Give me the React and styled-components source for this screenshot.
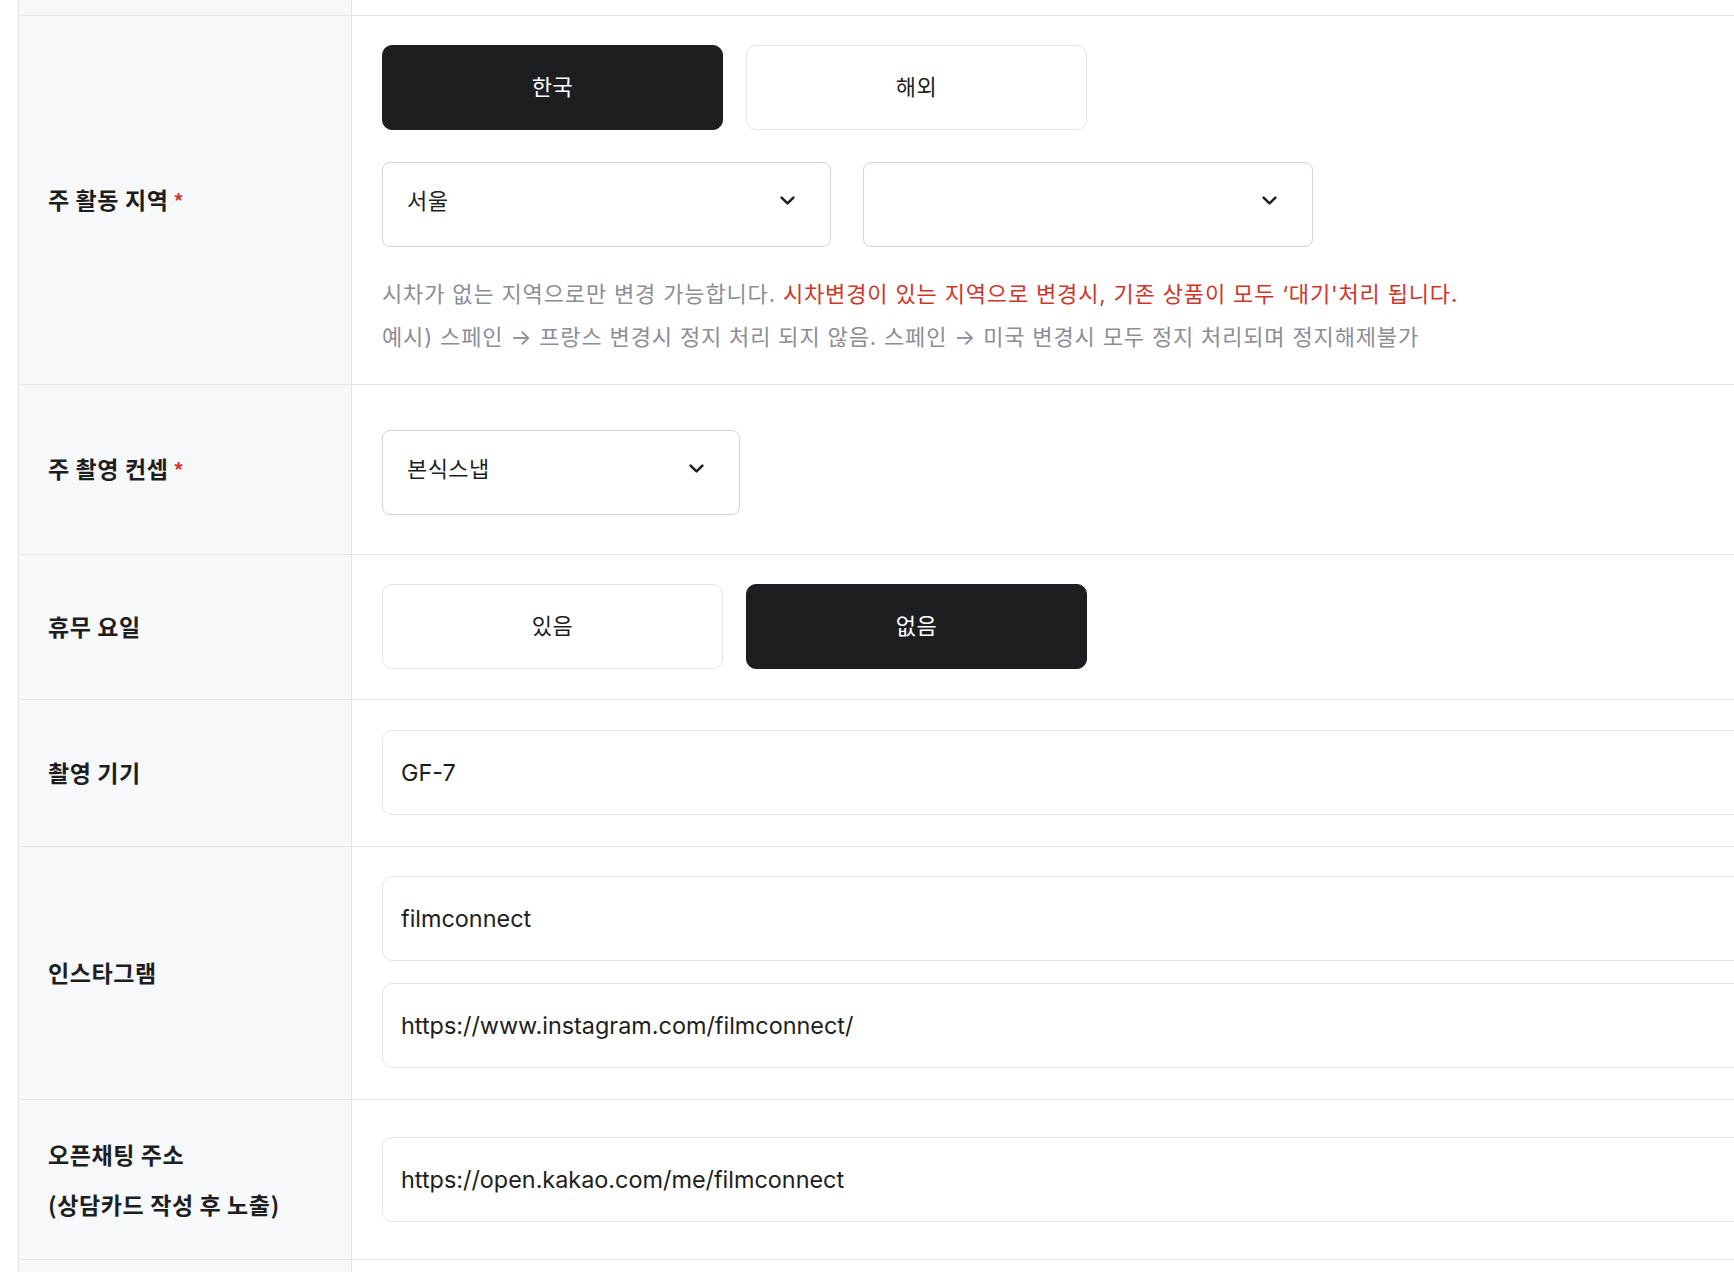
import React from 'react';
import styled, { createGlobalStyle } from 'styled-components';

const lineColor = '#e4e5e9';
const textColor = '#1d1e20';

const GlobalStyle = createGlobalStyle`
  html, body {
    margin: 0;
    padding: 0;
    background: #fff;
    overflow: hidden;
  }
  body {
    font-family: 'Inter', 'Noto Sans CJK KR', sans-serif;
    color: ${textColor};
  }
  * {
    box-sizing: border-box;
  }
`;

const Page = styled.div`
  width: 1980px;
  padding-left: 18px;
`;

const Table = styled.div`
  display: flex;
  flex-direction: column;
  border-left: 1px solid ${lineColor};
`;

const Row = styled.div`
  display: grid;
  grid-template-columns: 333px 1fr;
  border-bottom: 1px solid ${lineColor};
  min-height: ${({ $height }) => ($height ? `${$height}px` : 'auto')};
`;

const Label = styled.div`
  display: flex;
  flex-direction: column;
  justify-content: center;
  padding: ${({ $empty }) => ($empty ? '0' : '30px 29px')};
  background: #f7f8fa;
  border-right: 1px solid ${lineColor};
  font-family: 'Noto Sans CJK KR', sans-serif;
  font-size: 23px;
  font-weight: 700;
  line-height: 49.5px;
  letter-spacing: 0.6px;
`;

const Required = styled.span`
  margin-left: 5px;
  color: #d0352b;
  font-size: 20px;
`;

const Content = styled.div`
  display: flex;
  flex-direction: column;
  justify-content: center;
  padding: ${({ $pad }) => $pad || '30px 30px'};
`;

const ButtonGroup = styled.div`
  display: flex;
  gap: 23px;
`;

const Toggle = styled.button`
  width: 341px;
  height: 85px;
  border-radius: 10px;
  border: 1px solid ${({ $active }) => ($active ? textColor : lineColor)};
  background: ${({ $active }) => ($active ? textColor : '#fff')};
  color: ${({ $active }) => ($active ? '#fff' : textColor)};
  font-family: 'Noto Sans CJK KR', sans-serif;
  font-size: 22px;
  font-weight: 400;
  line-height: 1;
  letter-spacing: 0.4px;
  cursor: pointer;
  padding: 0 0 5px;
`;

const SelectGroup = styled.div`
  display: flex;
  gap: 32px;
  margin-top: 32px;
`;

const Select = styled.div`
  display: flex;
  align-items: center;
  justify-content: space-between;
  width: ${({ $width }) => $width}px;
  height: 85px;
  padding: 0 35px 9px 24px;
  border: 1px solid #d3d4da;
  border-radius: 8px;
  background: #fff;
  font-family: 'Noto Sans CJK KR', sans-serif;
  font-size: 22px;
  line-height: 1;
  letter-spacing: 0.4px;
`;

const SelectValue = styled.span`
  padding-bottom: 3px;
`;

const Chevron = styled.svg`
  width: 15px;
  height: 9px;
  flex: none;
`;

const Help = styled.p`
  margin: 26px 0 0;
  font-family: 'Inter', 'Noto Sans CJK KR', sans-serif;
  font-size: 22px;
  line-height: 43px;
  color: #8b8e96;
  letter-spacing: 0.85px;
`;

const Warn = styled.span`
  color: #d0352b;
`;

const InputStack = styled.div`
  display: flex;
  flex-direction: column;
  gap: 22px;
`;

const TextInput = styled.input`
  width: 100%;
  height: 85px;
  padding: 0 18px;
  border: 1px solid ${lineColor};
  border-radius: 10px;
  background: #fff;
  outline: none;
  font-family: 'Inter', 'Noto Sans CJK KR', sans-serif;
  font-size: 23.4px;
  color: ${textColor};
`;

const SelectBox = ({ value, width }) => (
  <Select $width={width}>
    <SelectValue>{value}</SelectValue>
    <Chevron viewBox="0 0 15 9" fill="none">
      <path d="M1.6 1.6L7.5 7.4L13.4 1.6" stroke={textColor} strokeWidth="2.5" strokeLinecap="round" strokeLinejoin="round" />
    </Chevron>
  </Select>
);

const App = () => (
  <>
    <GlobalStyle />
    <Page>
      <Table>
        <Row $height={16}>
          <Label $empty />
          <Content $pad="0" />
        </Row>

        <Row>
          <Label>
            <div>주 활동 지역<Required>*</Required></div>
          </Label>
          <Content $pad="29px 30px 25px">
            <ButtonGroup>
              <Toggle $active>한국</Toggle>
              <Toggle>해외</Toggle>
            </ButtonGroup>
            <SelectGroup>
              <SelectBox value="서울" width={449} />
              <SelectBox value="" width={450} />
            </SelectGroup>
            <Help>
              시차가 없는 지역으로만 변경 가능합니다.{' '}
              <Warn>시차변경이 있는 지역으로 변경시, 기존 상품이 모두 ‘대기'처리 됩니다.</Warn>
              <br />
              예시) 스페인 → 프랑스 변경시 정지 처리 되지 않음. 스페인 → 미국 변경시 모두 정지 처리되며 정지해제불가
            </Help>
          </Content>
        </Row>

        <Row>
          <Label>
            <div>주 촬영 컨셉<Required>*</Required></div>
          </Label>
          <Content $pad="45px 30px 39px">
            <SelectBox value="본식스냅" width={358} />
          </Content>
        </Row>

        <Row>
          <Label>휴무 요일</Label>
          <Content $pad="29px 30px 30px">
            <ButtonGroup>
              <Toggle>있음</Toggle>
              <Toggle $active>없음</Toggle>
            </ButtonGroup>
          </Content>
        </Row>

        <Row>
          <Label>촬영 기기</Label>
          <Content $pad="30px 30px 31px">
            <TextInput defaultValue="GF-7" />
          </Content>
        </Row>

        <Row>
          <Label>인스타그램</Label>
          <Content $pad="29px 30px 31px">
            <InputStack>
              <TextInput defaultValue="filmconnect" />
              <TextInput defaultValue="https://www.instagram.com/filmconnect/" />
            </InputStack>
          </Content>
        </Row>

        <Row>
          <Label>
            <div>오픈채팅 주소</div>
            <div>(상담카드 작성 후 노출)</div>
          </Label>
          <Content>
            <TextInput defaultValue="https://open.kakao.com/me/filmconnect" />
          </Content>
        </Row>

        <Row $height={120}>
          <Label $empty />
          <Content />
        </Row>
      </Table>
    </Page>
  </>
);

export default App;
